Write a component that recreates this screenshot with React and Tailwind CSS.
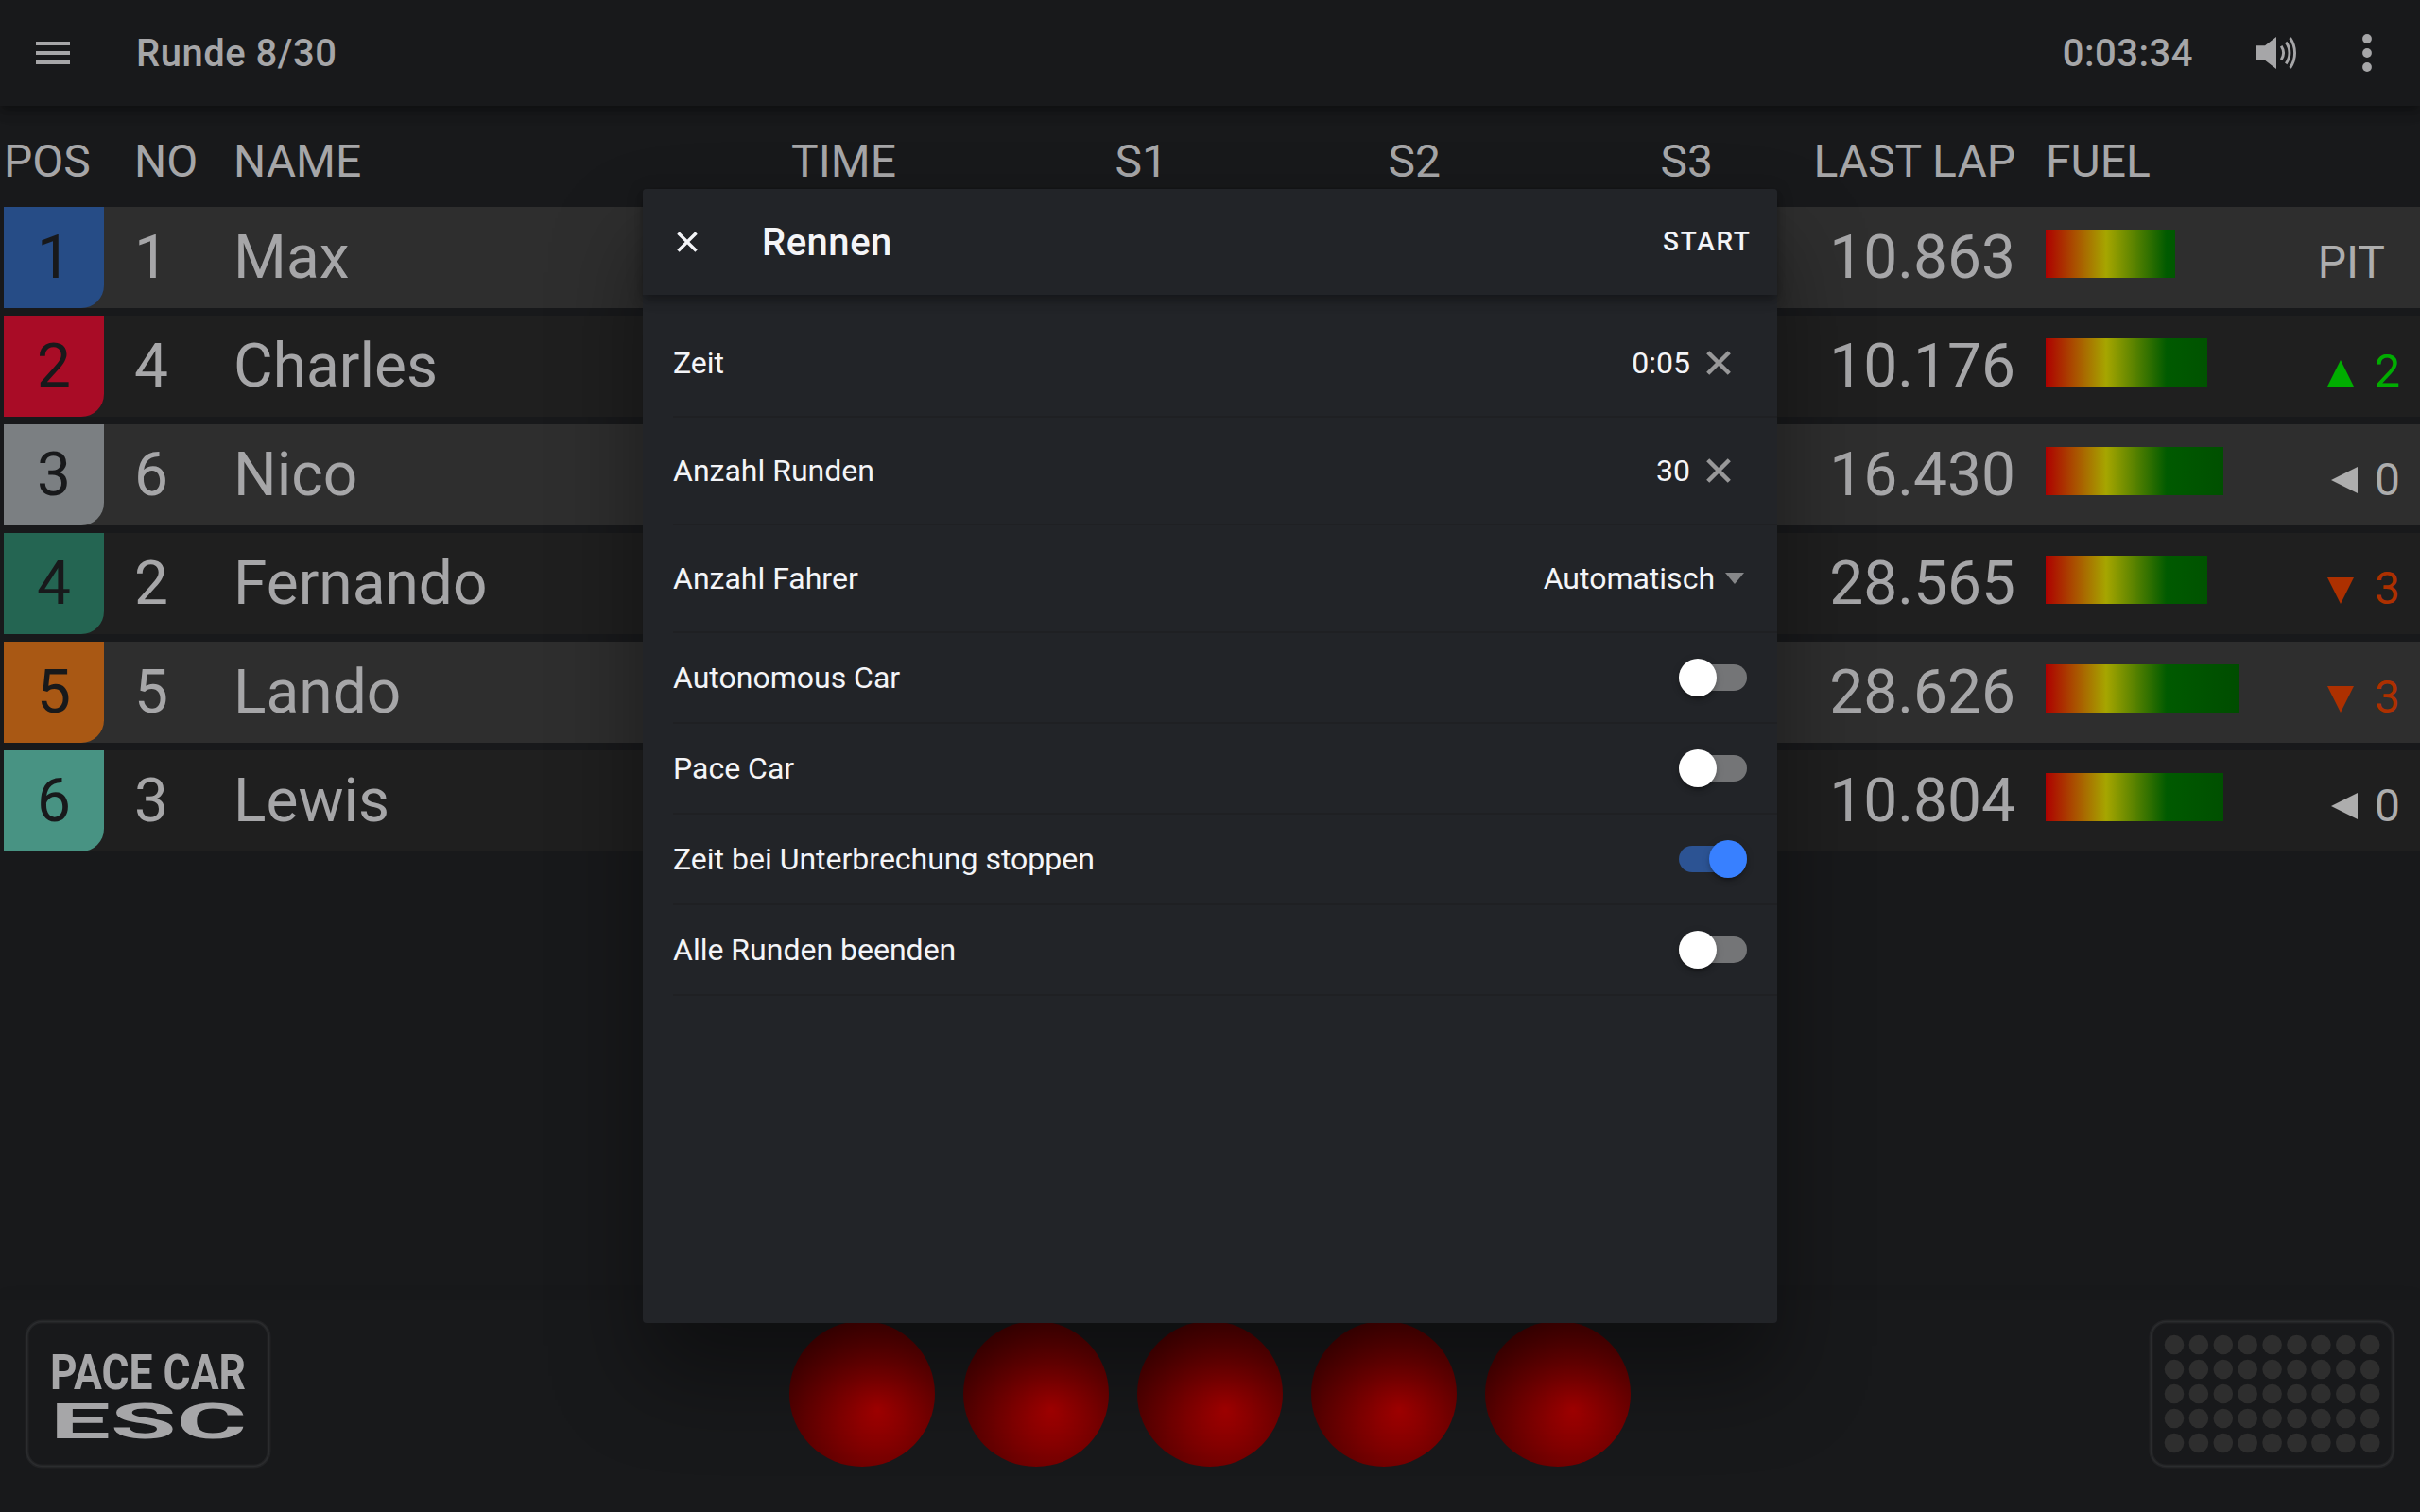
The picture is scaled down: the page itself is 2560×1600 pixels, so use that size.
const ELEV =
  "shadow-[0_4px_8px_-2px_rgba(0,0,0,0.2),0_8px_10px_0_rgba(0,0,0,0.14),0_2px_20px_0_rgba(0,0,0,0.12)]";

const COLS =
  "grid grid-cols-[106px_106px_400px_332px_287px_289px_288px_320px_256px_172px] pl-1";

const drivers = [
  { pos: 1, no: 1, name: "Max", last: "10.863", fuel: 8, color: "bg-[#264c86]", state: "pit" },
  { pos: 2, no: 4, name: "Charles", last: "10.176", fuel: 10, color: "bg-[#a90c26]", state: "up", n: 2 },
  { pos: 3, no: 6, name: "Nico", last: "16.430", fuel: 11, color: "bg-[#7b7f82]", state: "same", n: 0 },
  { pos: 4, no: 2, name: "Fernando", last: "28.565", fuel: 10, color: "bg-[#246552]", state: "down", n: 3 },
  { pos: 5, no: 5, name: "Lando", last: "28.626", fuel: 12, color: "bg-[#a95814]", state: "down", n: 3 },
  { pos: 6, no: 3, name: "Lewis", last: "10.804", fuel: 11, color: "bg-[#489383]", state: "same", n: 0 },
];

function Change({ state, n }) {
  if (state === "pit") {
    return <span className="pr-[37px] text-[#adadad]">PIT</span>;
  }
  const look = {
    up: { cls: "text-[#00ad00]", pts: "0,28 14,0 28,28", gap: "mr-[22px] mt-[5px]" },
    down: { cls: "text-[#ad3000]", pts: "0,0 28,0 14,28", gap: "mr-[22px] mt-[4px]" },
    same: { cls: "text-[#adadad]", pts: "28,0 28,28 0,14", gap: "mr-[18px]" },
  }[state];
  return (
    <span className={`flex items-center pr-[21px] ${look.cls}`}>
      <svg className={`h-7 w-7 ${look.gap}`} viewBox="0 0 28 28">
        <polygon points={look.pts} fill="currentColor" />
      </svg>
      {n}
    </span>
  );
}

function Row({ d, odd }) {
  return (
    <div className={`${COLS} h-[107px] shrink-0 grid-rows-[107px] text-[64px] leading-[107px]`}>
      <div className={odd ? "bg-[#2e2e2e]" : "bg-[#1f1f1f]"}>
        <div className={`h-full rounded-br-[24px] text-center text-[#18191b] ${d.color}`}>{d.pos}</div>
      </div>
      <div className={`col-span-9 grid grid-cols-subgrid grid-rows-[107px] ${odd ? "bg-[#2e2e2e]" : "bg-[#1f1f1f]"}`}>
        <div className="pl-[32px]">{d.no}</div>
        <div className="pl-[31px]">{d.name}</div>
        <div />
        <div />
        <div />
        <div />
        <div className="text-right">{d.last}</div>
        <div className="pt-6 pl-8">
          <div
            className="h-[51px] bg-[linear-gradient(to_right,#ad0000_0px,#a6a600_64px,#005a00_128px,#004400_256px)]"
            style={{ width: `${(d.fuel * 256) / 15}px` }}
          />
        </div>
        <div className="flex h-[112px] justify-end pt-[5px] text-5xl leading-[107px]">
          <Change state={d.state} n={d.n} />
        </div>
      </div>
    </div>
  );
}

function Cross({ className, width }) {
  return (
    <svg className={className} viewBox="0 0 26 26" fill="none" stroke="currentColor" strokeWidth={width}>
      <path d="M1.7 1.7L24.3 24.3M24.3 1.7L1.7 24.3" />
    </svg>
  );
}

function Toggle({ on }) {
  return (
    <div className={`mr-8 flex h-7 w-[72px] items-center rounded-full ${on ? "justify-end bg-[#2c5393]" : "bg-[#747577]"}`}>
      <div
        className={`h-10 w-10 shrink-0 rounded-full shadow-[0_6px_2px_-4px_rgba(0,0,0,0.2),0_4px_4px_0_rgba(0,0,0,0.14),0_2px_10px_0_rgba(0,0,0,0.12)] ${on ? "bg-[#3880ff]" : "bg-white"}`}
      />
    </div>
  );
}

function Item({ label, tall, children }) {
  return (
    <div className={`ml-8 flex items-center border-b-2 border-[#1f2023] ${tall ? "h-[114px]" : "h-[96px]"}`}>
      <span className="grow">{label}</span>
      {children}
    </div>
  );
}

function Modal() {
  return (
    <div className="absolute top-[200px] left-[680px] flex h-[1200px] w-[1200px] flex-col rounded-[4px] bg-[#222428] text-[32px] text-[#f4f5f8] shadow-[0_56px_96px_rgba(0,0,0,0.4)]">
      <div className={`flex h-[112px] shrink-0 items-center rounded-t-[4px] bg-[#222428] ${ELEV}`}>
        <Cross className="ml-9 h-[22px] w-[22px]" width={4} />
        <h2 className="ml-[68px] grow pt-[2px] text-[40px] font-medium tracking-[0.0125em]">Rennen</h2>
        <span className="mr-[27.5px] text-[28px] font-medium tracking-[0.06em]">START</span>
      </div>
      <div className="pt-4">
        <Item label="Zeit" tall>
          <span>0:05</span>
          <Cross className="mr-[49px] ml-[17px] h-[26px] w-[26px] text-[#989899]" width={4.4} />
        </Item>
        <Item label="Anzahl Runden" tall>
          <span>30</span>
          <Cross className="mr-[49px] ml-[17px] h-[26px] w-[26px] text-[#989899]" width={4.4} />
        </Item>
        <Item label="Anzahl Fahrer" tall>
          <span>Automatisch</span>
          <svg className="mr-[35px] ml-[11px] h-3 w-5" viewBox="0 0 20 12">
            <path d="M0 0h20L10 12z" fill="#868789" />
          </svg>
        </Item>
        <Item label="Autonomous Car"><Toggle /></Item>
        <Item label="Pace Car"><Toggle /></Item>
        <Item label="Zeit bei Unterbrechung stoppen"><Toggle on /></Item>
        <Item label="Alle Runden beenden"><Toggle /></Item>
      </div>
    </div>
  );
}

function Panel({ children }) {
  return (
    <svg className="h-[162px] w-[264px] overflow-visible" viewBox="0 0 264 162">
      <rect x="4.5" y="4.5" width="256" height="153" rx="16" fill="none" stroke="#222325" strokeWidth="4" />
      <rect x="4.5" y="4.5" width="256" height="153" rx="16" fill="none" stroke="#2b2c2e" strokeWidth="1.4" />
      {children}
    </svg>
  );
}

export default function App() {
  const dots = [];
  for (let r = 0; r < 5; r++) for (let c = 0; c < 9; c++) dots.push([29 + c * 25.9, 29 + r * 26]);
  return (
    <div className="relative flex h-[1600px] w-[2560px] flex-col overflow-hidden bg-[#18191b] font-['Roboto',sans-serif] text-[#a6a6a8]">
      <header className={`flex h-[112px] shrink-0 items-center text-[40px] font-medium tracking-[0.0125em] ${ELEV}`}>
        <div className="ml-[38px] flex w-9 flex-col gap-[6px]">
          <div className="h-1 bg-[#a6a6a8]" />
          <div className="h-1 bg-[#a6a6a8]" />
          <div className="h-1 bg-[#a6a6a8]" />
        </div>
        <h1 className="ml-[70px] grow pt-[2px]">Runde 8/30</h1>
        <span className="pt-[2px]">0:03:34</span>
        <svg className="ml-[67px] h-[34px] w-[43px]" viewBox="0 0 43 34" fill="none" stroke="currentColor" strokeWidth="2.9">
          <path d="M0 9.3h9L21 0v34L9 24.7H0z" fill="currentColor" stroke="none" />
          <path d="M26.2 9.8c3 4.5 3 9.900 0 14.400M31.200 5.600c5 7 5 15.800 0 22.800M35.600 1.200c6.600 9.500 6.600 22.100 0 31.600" />
        </svg>
        <svg className="mr-[50px] ml-[68px] h-10 w-3" viewBox="0 0 12 40" fill="currentColor">
          <circle cx="6" cy="5" r="4.9" />
          <circle cx="6" cy="20" r="4.9" />
          <circle cx="6" cy="35" r="4.9" />
        </svg>
      </header>

      <main className="flex grow flex-col gap-2">
        <div className={`${COLS} h-[99px] shrink-0 pt-[17px] text-5xl leading-[84px] whitespace-nowrap`}>
          <div>POS</div>
          <div className="pl-[32px]">NO</div>
          <div className="pl-[31px]">NAME</div>
          <div className="text-right">TIME</div>
          <div className="text-right">S1</div>
          <div className="text-right">S2</div>
          <div className="text-right">S3</div>
          <div className="text-right">LAST LAP</div>
          <div className="pl-8">FUEL</div>
        </div>
        {drivers.map((d, i) => (
          <Row key={d.pos} d={d} odd={i % 2 === 0} />
        ))}
      </main>

      <footer className="flex h-[224px] shrink-0 items-start justify-between bg-[#18191b] pt-[18px] pr-[25px] pl-6 shadow-[0_2px_20px_0_rgba(0,0,0,0.09)]">
        <Panel>
          <g fill="#a6a6a8" fontFamily="Roboto" fontWeight="700" fontSize="52">
            <text x="29" y="76" textLength="207" lengthAdjust="spacingAndGlyphs">PACE CAR</text>
            <text x="29" y="128" textLength="208" lengthAdjust="spacingAndGlyphs">ESC</text>
          </g>
        </Panel>
        <div className="flex gap-[30px] pt-1">
          {[0, 1, 2, 3, 4].map((i) => (
            <div
              key={i}
              className="h-[154px] w-[154px] rounded-full bg-[radial-gradient(circle_at_60.5%_60.5%,#ac0000_0px,#440000_110px)]"
            />
          ))}
        </div>
        <Panel>
          {dots.map(([x, y], i) => (
            <circle key={i} cx={x} cy={y} r="10.3" fill="#2e2e2e" />
          ))}
        </Panel>
      </footer>
      <Modal />
    </div>
  );
}
